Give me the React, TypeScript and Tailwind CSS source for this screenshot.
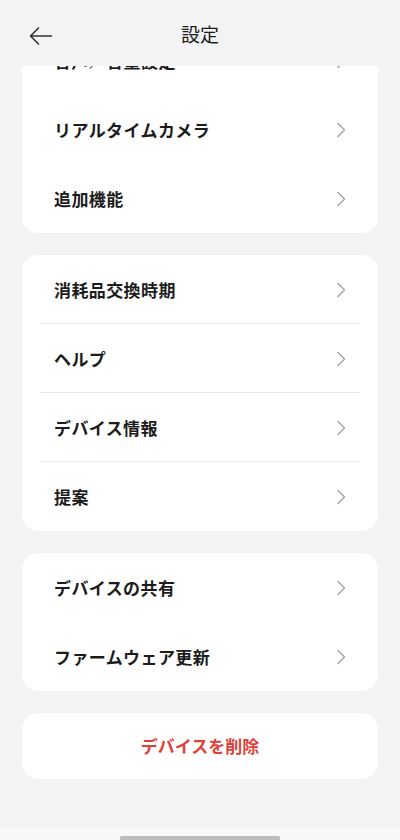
const FONT = "font-['Noto_Sans_CJK_JP','Noto_Sans',sans-serif]"

const GROUPS: { items: string[]; dividers?: boolean }[] = [
  { items: ['音声／音量設定', 'リアルタイムカメラ', '追加機能'] },
  { items: ['消耗品交換時期', 'ヘルプ', 'デバイス情報', '提案'], dividers: true },
  { items: ['デバイスの共有', 'ファームウェア更新'] },
]

function Chevron() {
  return (
    <svg className="h-[16px] w-[10px] text-[#a3a3a3]" viewBox="0 0 10 16" fill="none" stroke="currentColor" strokeWidth={1.4}>
      <path strokeLinecap="round" strokeLinejoin="round" d="M2 1.5l6.5 6.5L2 14.5" />
    </svg>
  )
}

function Row({ label, divider }: { label: string; divider?: boolean }) {
  return (
    <div className="relative flex h-[69px] items-center justify-between px-[32px]">
      <span className="text-[17px] font-bold text-[#1c1c1c] tracking-[0.4px]">{label}</span>
      <Chevron />
      {divider && <div className="absolute bottom-0 left-[18px] right-[18px] h-px bg-[#e9e9e9]" />}
    </div>
  )
}

export default function App() {
  return (
    <div className={`${FONT} flex h-[840px] w-[400px] flex-col overflow-hidden bg-[#f3f3f3]`}>
      {/* Header */}
      <div className="relative z-10 flex h-[66px] shrink-0 items-center justify-center bg-[#f3f3f3]">
        <button className="absolute left-[29px] top-[26px] text-[#333]">
          <svg className="h-[20px] w-[24px]" viewBox="0 0 24 20" fill="none" stroke="currentColor" strokeWidth={1.6}>
            <path strokeLinecap="round" strokeLinejoin="round" d="M22.5 10H1.5M9.5 2L1.5 10l8 8" />
          </svg>
        </button>
        <h1 className="mt-[3px] text-[19px] font-normal text-[#1c1c1c]">設定</h1>
      </div>

      {/* Scrolled list */}
      <div className="flex-1 overflow-hidden">
        <div className="-mt-[40px] flex flex-col gap-[22px] px-[22px]">
          {GROUPS.map((g, gi) => (
            <div key={gi} className="rounded-[16px] bg-white">
              {g.items.map((label, i) => (
                <Row key={label} label={label} divider={g.dividers && i < g.items.length - 1} />
              ))}
            </div>
          ))}
          <button className="flex h-[66px] items-center justify-center rounded-[16px] bg-white text-[17px] font-bold text-[#e0403a]">
            デバイスを削除
          </button>
        </div>
      </div>

      {/* Home indicator */}
      <div className="flex h-[12px] shrink-0 items-end justify-center bg-[#f8f8f8]">
        <div className="h-[4px] w-[160px] rounded-t-[2px] bg-[#bcbcbc]" />
      </div>
    </div>
  )
}
